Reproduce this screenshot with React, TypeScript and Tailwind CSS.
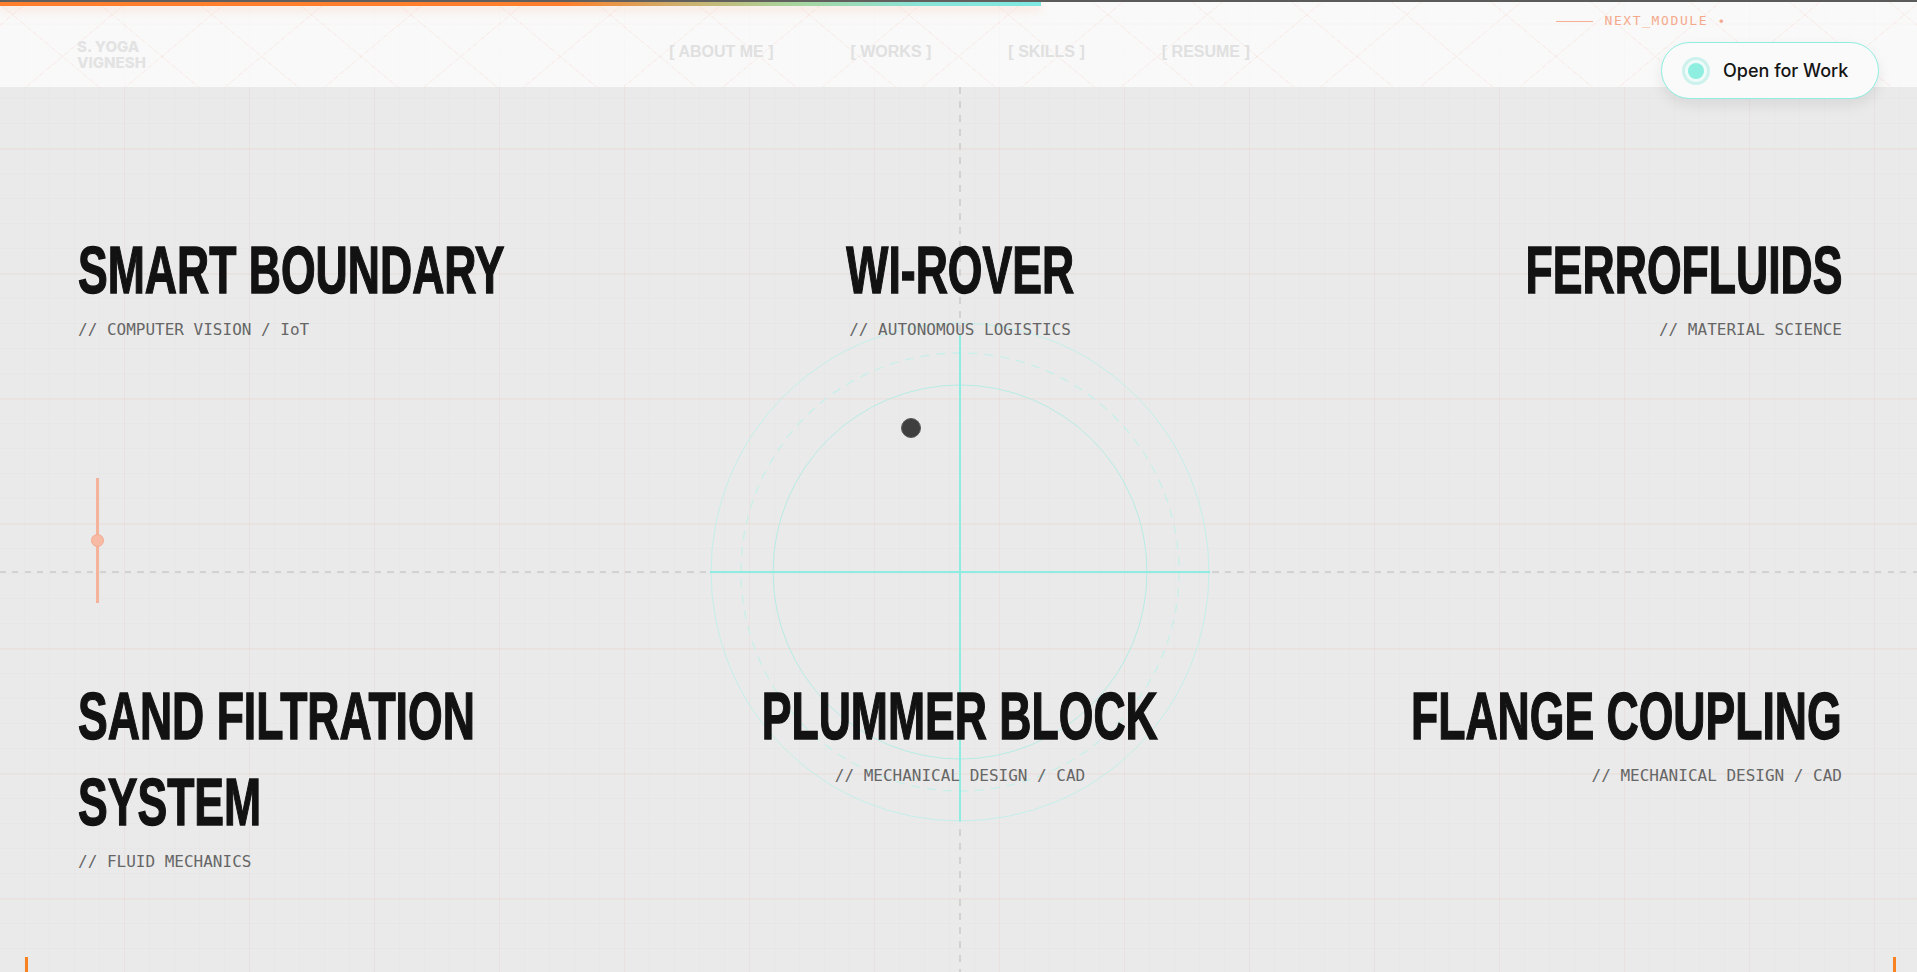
import React from "react";

type Project = {
  title: string[];
  tag: string;
  align: "left" | "center" | "right";
};

const projects: Project[] = [
  { title: ["SMART BOUNDARY"], tag: "// COMPUTER VISION / IoT", align: "left" },
  { title: ["WI-ROVER"], tag: "// AUTONOMOUS LOGISTICS", align: "center" },
  { title: ["FERROFLUIDS"], tag: "// MATERIAL SCIENCE", align: "right" },
  { title: ["SAND FILTRATION", "SYSTEM"], tag: "// FLUID MECHANICS", align: "left" },
  { title: ["PLUMMER BLOCK"], tag: "// MECHANICAL DESIGN / CAD", align: "center" },
  { title: ["FLANGE COUPLING"], tag: "// MECHANICAL DESIGN / CAD", align: "right" },
];

// condensed look: the wide fallback face is squeezed from its aligned edge
const alignCol = {
  left: "items-start text-left",
  center: "items-center text-center",
  right: "items-end text-right",
};

const origin = {
  left: "origin-left",
  center: "origin-center",
  right: "origin-right",
};

const navItems = ["[ ABOUT ME ]", "[ WORKS ]", "[ SKILLS ]", "[ RESUME ]"];

function Radar() {
  return (
    <svg width="500" height="500" viewBox="0 0 500 500" fill="none">
      <circle cx="250" cy="250" r="249" stroke="#c4efe9" strokeWidth="1" />
      <circle cx="250" cy="250" r="219" stroke="#c8efe9" strokeWidth="1.3" strokeDasharray="9 7" />
      <circle cx="250" cy="250" r="187" stroke="#b7ece5" strokeWidth="1" />
      <line x1="250" y1="12" x2="250" y2="499" stroke="#8eece1" strokeWidth="2" />
      <line x1="0" y1="250" x2="500" y2="250" stroke="#8eece1" strokeWidth="2" />
      <circle cx="201" cy="106" r="9.5" fill="#3f3f3f" stroke="#5a5a5a" strokeWidth="1" />
    </svg>
  );
}

function Header() {
  return (
    <header className="relative flex h-[87px] flex-col bg-white/70 bg-[repeating-linear-gradient(40deg,transparent_0_63px,rgba(245,140,110,0.09)_63px_64px),repeating-linear-gradient(-40deg,transparent_0_63px,rgba(245,140,110,0.09)_63px_64px)]">
      <div className="h-[2px] w-full bg-[#5b5b5b]" />
      <div className="h-[4px] w-[1041px] bg-[linear-gradient(to_right,#ff7f2a_0%,#ff7f2a_54%,#d3aa64_64%,#a9d49c_76%,#8ae3d6_88%,#7fe9e2_100%)] shadow-[0_4px_8px_rgba(255,190,160,0.45)]" />

      <div className="flex flex-1 items-start pl-[77px] pr-[75px]">
        <div className="flex flex-1 flex-col gap-[2px] pt-[34px] font-['Inter',sans-serif] text-[15px] font-extrabold leading-[14px] text-[#e3e3e3]">
          <span>S. YOGA</span>
          <span>VIGNESH</span>
        </div>
        <nav className="flex gap-[77px] pt-[38px] font-['Liberation_Sans',sans-serif] text-[16px] font-bold leading-[16px] text-[#e0e0e0]">
          {navItems.map((n) => (
            <span key={n} className="whitespace-pre">{n}</span>
          ))}
        </nav>
        <div className="flex-1" />
      </div>

      {/* next module label */}
      <div className="absolute right-[192px] top-[13px] flex items-center gap-[11px] font-['DejaVu_Sans_Mono',monospace] text-[13px] leading-[16px] tracking-[1.6px] text-[#f5a98b]">
        <span className="h-px w-[37px] bg-[#f6ad92]" />
        <span>NEXT_MODULE</span>
        <span className="text-[7px]">◆</span>
      </div>

      {/* status pill, hangs below the bar */}
      <button className="absolute right-[38px] top-[42px] z-20 flex h-[57px] w-[218px] items-center gap-[13px] rounded-full border border-[#8eeee0] bg-[#fafafa] pl-[20px] shadow-[0_6px_14px_rgba(0,0,0,0.08)]">
        <span className="flex h-[28px] w-[28px] items-center justify-center rounded-full border-[3px] border-[#cdf1ec] bg-[#eefaf8]">
          <span className="h-[16px] w-[16px] rounded-full bg-[#8eeee0]" />
        </span>
        <span className="font-['Inter',sans-serif] text-[18px] font-medium text-[#151515]">Open for Work</span>
      </button>
    </header>
  );
}

export default function App() {
  return (
    <div className="relative h-[972px] w-full overflow-hidden bg-[#eaeaea] [background-image:linear-gradient(to_right,transparent_124px,rgba(240,150,120,0.07)_124px,rgba(240,150,120,0.07)_126px,transparent_126px),linear-gradient(to_bottom,transparent_23px,rgba(240,150,120,0.07)_23px,rgba(240,150,120,0.07)_25px,transparent_25px),linear-gradient(to_right,transparent_24px,rgba(0,0,0,0.013)_24px),linear-gradient(to_bottom,transparent_23px,rgba(0,0,0,0.012)_23px,rgba(0,0,0,0.012)_24px,transparent_24px)] [background-size:125px_125px,125px_125px,25px_25px,25px_25px]">
      <Header />

      <main className="relative h-[885px]">
        {/* guides */}
        <div className="absolute left-[959px] top-0 h-full w-[2px] bg-[repeating-linear-gradient(to_bottom,#d2d2d2_0_7px,transparent_7px_14px)]" />
        <div className="absolute left-0 top-[484px] h-[2px] w-full bg-[repeating-linear-gradient(to_right,#d2d2d2_0_6px,transparent_6px_12.5px)]" />
        <div className="absolute left-[710px] top-[235px]">
          <Radar />
        </div>

        {/* side slider */}
        <div className="absolute left-[96px] top-[391px] h-[125px] w-[3px] bg-[#f6b39b]" />
        <div className="absolute left-[91px] top-[447px] h-[13px] w-[13px] rounded-full border border-[#f4a98e] bg-[#f7bba5]" />

        {/* corner ticks */}
        <div className="absolute bottom-0 left-[25px] h-[15px] w-[3px] bg-[#f7821f]" />
        <div className="absolute bottom-0 right-[21px] h-[15px] w-[3px] bg-[#f7821f]" />

        <div className="relative z-10 grid grid-cols-3 gap-y-[331px] pl-[78px] pr-[75px] pt-[140px]">
          {projects.map((p) => (
            <div key={p.tag + p.title[0]} className={`flex flex-col ${alignCol[p.align]}`}>
              <h2
                className={`w-max scale-x-[0.665] whitespace-nowrap font-['Liberation_Sans',sans-serif] text-[67px] font-bold leading-[86px] text-[#121212] [-webkit-text-stroke:1.4px_#121212] ${origin[p.align]}`}
              >
                {p.title.map((line, i) => (
                  <React.Fragment key={line}>
                    {i > 0 && <br />}
                    {line}
                  </React.Fragment>
                ))}
              </h2>
              <p className="mt-[5px] font-['DejaVu_Sans_Mono',monospace] text-[16px] leading-[24px] text-[#666666]">
                {p.tag}
              </p>
            </div>
          ))}
        </div>
      </main>
    </div>
  );
}
